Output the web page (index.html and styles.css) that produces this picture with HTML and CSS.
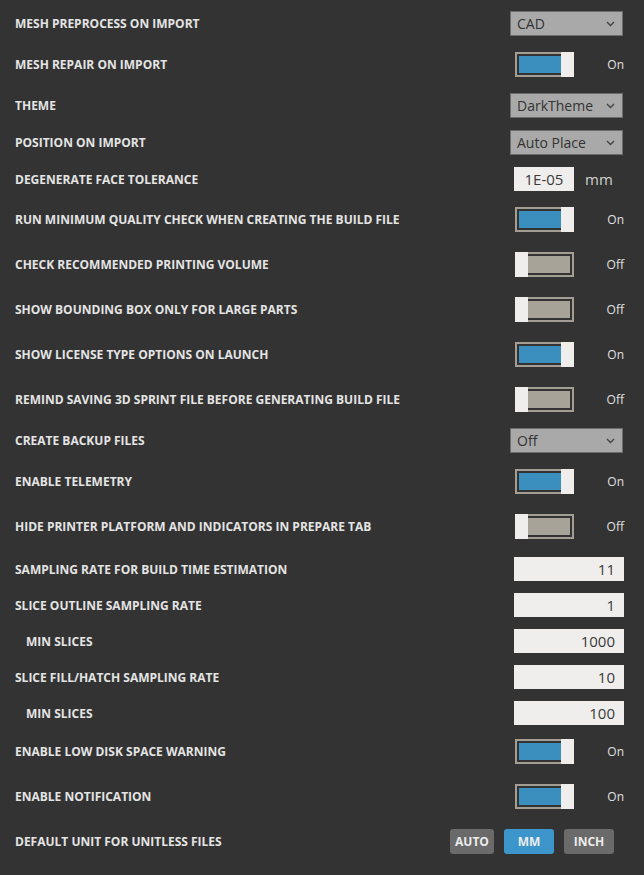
FILE: index.html
```html
<!DOCTYPE html>
<html lang="en">
<head>
  <meta charset="UTF-8">
  <title>Settings</title>
  <link rel="stylesheet" href="styles.css">
</head>
<body>
  <div class="settings">
    <div class="row row-select">
      <span class="label">MESH PREPROCESS ON IMPORT</span>
      <div class="ctrl">
        <div class="select"><span>CAD</span><svg width="9" height="6" viewBox="0 0 9 6"><path d="M1 1l3.5 3.5L8 1" fill="none" stroke="#444" stroke-width="1.4"/></svg></div>
      </div>
    </div>
    <div class="row row-toggle">
      <span class="label">MESH REPAIR ON IMPORT</span>
      <div class="ctrl ctrl-toggle"><span class="toggle on"><span class="fill"></span><span class="knob"></span></span><span class="state">On</span></div>
    </div>
    <div class="row row-select">
      <span class="label">THEME</span>
      <div class="ctrl">
        <div class="select"><span>DarkTheme</span><svg width="9" height="6" viewBox="0 0 9 6"><path d="M1 1l3.5 3.5L8 1" fill="none" stroke="#444" stroke-width="1.4"/></svg></div>
      </div>
    </div>
    <div class="row row-select">
      <span class="label">POSITION ON IMPORT</span>
      <div class="ctrl">
        <div class="select"><span>Auto Place</span><svg width="9" height="6" viewBox="0 0 9 6"><path d="M1 1l3.5 3.5L8 1" fill="none" stroke="#444" stroke-width="1.4"/></svg></div>
      </div>
    </div>
    <div class="row row-input">
      <span class="label">DEGENERATE FACE TOLERANCE</span>
      <div class="ctrl ctrl-unit"><span class="input input-short">1E-05</span><span class="unit">mm</span></div>
    </div>
    <div class="row row-toggle">
      <span class="label">RUN MINIMUM QUALITY CHECK WHEN CREATING THE BUILD FILE</span>
      <div class="ctrl ctrl-toggle"><span class="toggle on"><span class="fill"></span><span class="knob"></span></span><span class="state">On</span></div>
    </div>
    <div class="row row-toggle">
      <span class="label">CHECK RECOMMENDED PRINTING VOLUME</span>
      <div class="ctrl ctrl-toggle"><span class="toggle off"><span class="fill"></span><span class="knob"></span></span><span class="state">Off</span></div>
    </div>
    <div class="row row-toggle">
      <span class="label">SHOW BOUNDING BOX ONLY FOR LARGE PARTS</span>
      <div class="ctrl ctrl-toggle"><span class="toggle off"><span class="fill"></span><span class="knob"></span></span><span class="state">Off</span></div>
    </div>
    <div class="row row-toggle">
      <span class="label">SHOW LICENSE TYPE OPTIONS ON LAUNCH</span>
      <div class="ctrl ctrl-toggle"><span class="toggle on"><span class="fill"></span><span class="knob"></span></span><span class="state">On</span></div>
    </div>
    <div class="row row-toggle">
      <span class="label">REMIND SAVING 3D SPRINT FILE BEFORE GENERATING BUILD FILE</span>
      <div class="ctrl ctrl-toggle"><span class="toggle off"><span class="fill"></span><span class="knob"></span></span><span class="state">Off</span></div>
    </div>
    <div class="row row-select">
      <span class="label">CREATE BACKUP FILES</span>
      <div class="ctrl">
        <div class="select"><span>Off</span><svg width="9" height="6" viewBox="0 0 9 6"><path d="M1 1l3.5 3.5L8 1" fill="none" stroke="#444" stroke-width="1.4"/></svg></div>
      </div>
    </div>
    <div class="row row-toggle">
      <span class="label">ENABLE TELEMETRY</span>
      <div class="ctrl ctrl-toggle"><span class="toggle on"><span class="fill"></span><span class="knob"></span></span><span class="state">On</span></div>
    </div>
    <div class="row row-toggle">
      <span class="label">HIDE PRINTER PLATFORM AND INDICATORS IN PREPARE TAB</span>
      <div class="ctrl ctrl-toggle"><span class="toggle off"><span class="fill"></span><span class="knob"></span></span><span class="state">Off</span></div>
    </div>
    <div class="sampling">
      <div class="row row-input">
        <span class="label">SAMPLING RATE FOR BUILD TIME ESTIMATION</span>
        <div class="ctrl"><span class="input">11</span></div>
      </div>
      <div class="row row-input">
        <span class="label">SLICE OUTLINE SAMPLING RATE</span>
        <div class="ctrl"><span class="input">1</span></div>
      </div>
      <div class="row row-input">
        <span class="label sub">MIN SLICES</span>
        <div class="ctrl"><span class="input">1000</span></div>
      </div>
      <div class="row row-input">
        <span class="label">SLICE FILL/HATCH SAMPLING RATE</span>
        <div class="ctrl"><span class="input">10</span></div>
      </div>
      <div class="row row-input">
        <span class="label sub">MIN SLICES</span>
        <div class="ctrl"><span class="input">100</span></div>
      </div>
    </div>
    <div class="row row-toggle">
      <span class="label">ENABLE LOW DISK SPACE WARNING</span>
      <div class="ctrl ctrl-toggle"><span class="toggle on"><span class="fill"></span><span class="knob"></span></span><span class="state">On</span></div>
    </div>
    <div class="row row-toggle">
      <span class="label">ENABLE NOTIFICATION</span>
      <div class="ctrl ctrl-toggle"><span class="toggle on"><span class="fill"></span><span class="knob"></span></span><span class="state">On</span></div>
    </div>
    <div class="row row-toggle">
      <span class="label">DEFAULT UNIT FOR UNITLESS FILES</span>
      <div class="units">
        <span class="unit-btn">AUTO</span>
        <span class="unit-btn active">MM</span>
        <span class="unit-btn">INCH</span>
      </div>
    </div>
  </div>
</body>
</html>
```

FILE: styles.css
```css
body {
  margin: 0;
  background: #333333;
  font-family: "Open Sans", "Noto Sans", sans-serif;
}
.settings {
  display: flex;
  flex-direction: column;
  padding: 5px 20px 0 15px;
}
.row {
  display: flex;
  align-items: center;
  justify-content: space-between;
}
.row-select {
  height: 37px;
}
.row-toggle {
  height: 45px;
}
.row-input {
  height: 36px;
}
.sampling {
  margin: 2px 0 -2px;
}
.label {
  color: #e4e4e4;
  font-size: 12px;
  font-weight: bold;
  letter-spacing: 0;
  white-space: nowrap;
}
.label.sub {
  margin-left: 11px;
}
.ctrl {
  width: 114px;
  display: flex;
  align-items: center;
}
.select {
  box-sizing: border-box;
  width: 113px;
  height: 25px;
  background: #a9a9a9;
  border: 1px solid #6c6c6c;
  display: flex;
  align-items: center;
  justify-content: space-between;
  padding: 0 7px 0 6px;
  color: #333;
  font-size: 14px;
}
.ctrl-toggle {
  padding-left: 5px;
  box-sizing: border-box;
}
.toggle {
  position: relative;
  box-sizing: border-box;
  width: 60px;
  height: 25px;
  border: 2px solid #a39e94;
  padding: 2px;
  background: #333;
  display: block;
}
.toggle .fill {
  display: block;
  height: 100%;
}
.toggle.on .fill {
  background: #3a8fbf;
}
.toggle.off .fill {
  background: #a8a398;
}
.toggle .knob {
  position: absolute;
  top: -2px;
  bottom: -2px;
  width: 13px;
  background: #efeeec;
}
.toggle.on .knob {
  right: -2px;
}
.toggle.off .knob {
  left: -2px;
}
.state {
  margin-left: 33px;
  color: #e0e0e0;
  font-size: 12px;
  white-space: nowrap;
}
.input {
  box-sizing: border-box;
  width: 110px;
  height: 24px;
  margin-left: 4px;
  background: #efeeec;
  color: #3a3a3a;
  font-size: 15px;
  line-height: 24px;
  text-align: right;
  padding-right: 9px;
}
.input.input-short {
  width: 60px;
  text-align: center;
  padding: 0;
}
.unit {
  margin-left: 11px;
  color: #d0d0d0;
  font-size: 15px;
}
.units {
  display: flex;
  gap: 10px;
  margin-right: 10px;
}
.unit-btn {
  box-sizing: border-box;
  width: 50px;
  height: 25px;
  border-radius: 3px;
  background: #6a6a6a;
  color: #ececec;
  font-size: 12px;
  font-weight: bold;
  display: flex;
  align-items: center;
  justify-content: center;
}
.unit-btn:first-child {
  width: 44px;
}
.unit-btn.active {
  background: #3d96cb;
}
```
